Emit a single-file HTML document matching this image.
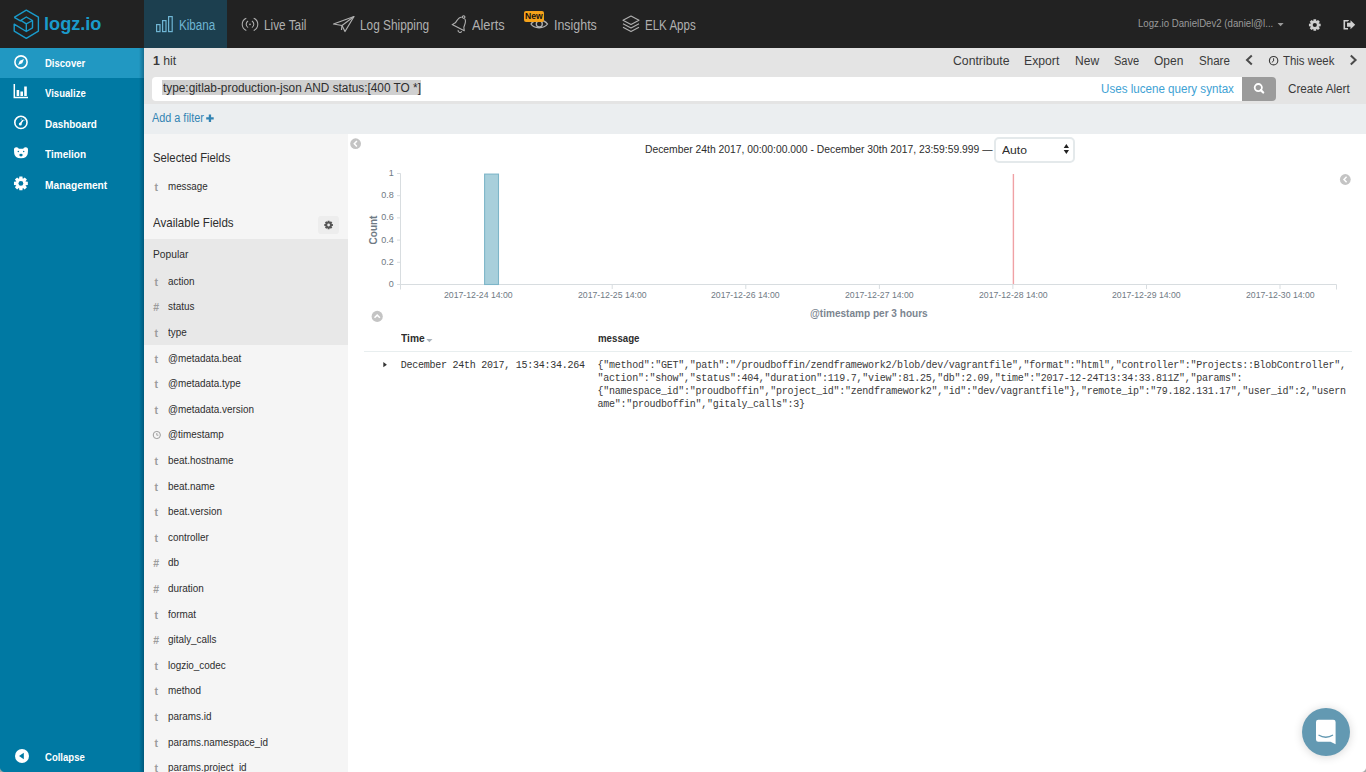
<!DOCTYPE html>
<html><head><meta charset="utf-8">
<style>
*{box-sizing:border-box;margin:0;padding:0}
html,body{width:1366px;height:772px;overflow:hidden;background:#fff;font-family:"Liberation Sans",sans-serif;color:#2d2d2d;position:relative}
.a{position:absolute;white-space:nowrap}
svg.a{overflow:visible}
</style></head><body>
<div class="a" style="left:0px;top:0px;width:1366px;height:48px;background:#222222;"></div>
<div class="a" style="left:0px;top:48px;width:144px;height:724px;background:#0079a3;"></div>
<div class="a" style="left:0px;top:48px;width:144px;height:30px;background:#2198c2;"></div>
<div class="a" style="left:139px;top:48px;width:5px;height:724px;background:linear-gradient(90deg,rgba(0,30,50,0),rgba(0,30,50,0.35));"></div>
<div class="a" style="left:144px;top:48px;width:1222px;height:56px;background:#e4e4e4;"></div>
<div class="a" style="left:144px;top:104px;width:1222px;height:30px;background:#ebeef0;"></div>
<div class="a" style="left:144px;top:134px;width:204px;height:638px;background:#f5f5f5;"></div>
<div class="a" style="left:144px;top:238.5px;width:204px;height:106px;background:#e8e8e8;"></div>
<div class="a" style="left:144px;top:0px;width:83px;height:48px;background:#1c3f4f;"></div>
<svg class="a" style="left:0;top:0" width="60" height="48" viewBox="0 0 60 48"><path d="M14.2 17.4 L26.3 10.2 L38.4 17.2 L38.4 31.1 L26.3 38.4 L14.2 31.1 L14.2 24.1 L26.3 31.5 L32.5 27.8 L32.5 20.5 L26.3 17 L20.8 20.3 L26.3 23.8 L32.5 20.5 M26.3 23.8 L26.3 31.5 M14.2 17.4 L20.8 21.2" fill="none" stroke="#1a9bcb" stroke-width="1.4" stroke-linejoin="round"/></svg>
<div class="a" style="left:44.00px;top:16.09px;font:bold 17.5px/17.5px 'Liberation Sans',sans-serif;color:#1a9bcb;transform:scaleX(1.0369);transform-origin:0 0;">logz.io</div>
<div class="a" style="left:179.40px;top:17.65px;font:normal 14px/14px 'Liberation Sans',sans-serif;color:#6fb5d3;transform:scaleX(0.8311);transform-origin:0 0;">Kibana</div>
<div class="a" style="left:264.00px;top:17.65px;font:normal 14px/14px 'Liberation Sans',sans-serif;color:#b0b0b0;transform:scaleX(0.8431);transform-origin:0 0;">Live Tail</div>
<div class="a" style="left:360.10px;top:17.65px;font:normal 14px/14px 'Liberation Sans',sans-serif;color:#b0b0b0;transform:scaleX(0.8460);transform-origin:0 0;">Log Shipping</div>
<div class="a" style="left:472.00px;top:17.65px;font:normal 14px/14px 'Liberation Sans',sans-serif;color:#b0b0b0;transform:scaleX(0.9116);transform-origin:0 0;">Alerts</div>
<div class="a" style="left:554.00px;top:17.65px;font:normal 14px/14px 'Liberation Sans',sans-serif;color:#b0b0b0;transform:scaleX(0.8869);transform-origin:0 0;">Insights</div>
<div class="a" style="left:645.00px;top:17.65px;font:normal 14px/14px 'Liberation Sans',sans-serif;color:#b0b0b0;transform:scaleX(0.8243);transform-origin:0 0;">ELK Apps</div>
<svg class="a" style="left:150px;top:10px" width="30" height="28" viewBox="150 10 30 28"><g fill="none" stroke="#6fb5d3" stroke-width="1.2"><rect x="156.6" y="24.6" width="3.4" height="7"/><rect x="162.6" y="20.6" width="3.4" height="11"/><rect x="168.6" y="16.6" width="3.6" height="15"/></g></svg>
<svg class="a" style="left:236px;top:10px" width="30" height="28" viewBox="236 10 30 28"><g fill="none" stroke="#b0b0b0" stroke-width="1.05"><path d="M246.3 18.2 A6.6 6.6 0 0 0 246.3 30.4"/><path d="M253.7 18.2 A6.6 6.6 0 0 1 253.7 30.4"/><path d="M248.1 21 A3.8 3.8 0 0 0 248.1 27.6"/><path d="M251.9 21 A3.8 3.8 0 0 1 251.9 27.6"/></g><circle cx="250" cy="24.3" r="0.85" fill="#b0b0b0"/></svg>
<svg class="a" style="left:330px;top:10px" width="30" height="28" viewBox="330 10 30 28"><g fill="none" stroke="#b0b0b0" stroke-width="1.2" stroke-linejoin="round"><path d="M333.5 24 L354 16.5 L345 31.5 L342 25.5 Z"/><path d="M342 25.5 L354 16.5"/><path d="M342 25.5 L341.5 30"/></g></svg>
<svg class="a" style="left:448px;top:10px" width="24" height="28" viewBox="448 10 24 28"><g fill="none" stroke="#b0b0b0" stroke-width="1.1" stroke-linejoin="round"><g transform="translate(460.3 23.6) rotate(27)"><circle cx="0" cy="-7.4" r="1.25"/><path d="M-1.5 -6.3 C-4.5 -5.7 -4.3 -1.5 -4.8 1.6 L-6.8 4.6 L6.8 4.6 L4.8 1.6 C4.3 -1.5 4.5 -5.7 1.5 -6.3"/></g><path d="M458.2 30 A1.7 1.7 0 0 0 461.6 31.2"/></g></svg>
<svg class="a" style="left:526px;top:14px" width="26" height="20" viewBox="526 14 26 20"><g fill="none" stroke="#b0b0b0" stroke-width="1.3"><path d="M531 24 C534 19 544 19 547.5 24 C544 29 534 29 531 24 Z"/><circle cx="539.3" cy="24" r="3"/></g></svg>
<div class="a" style="left:524px;top:11px;width:19.5px;height:10.5px;background:#f5a21a;border-radius:2px"></div>
<div class="a" style="left:525.40px;top:11.98px;font:bold 9px/9px 'Liberation Sans',sans-serif;color:#111111;transform:scaleX(0.9558);transform-origin:0 0;">New</div>
<svg class="a" style="left:618px;top:12px" width="26" height="24" viewBox="618 12 26 24"><g fill="none" stroke="#b0b0b0" stroke-width="1.1" stroke-linejoin="round"><path d="M631 16 L639 20.3 L631 24.6 L623 20.3 Z"/><path d="M623 23.8 L631 28.1 L639 23.8"/><path d="M623 27.3 L631 31.6 L639 27.3"/></g></svg>
<div class="a" style="left:1138.00px;top:18.47px;font:normal 11.5px/11.5px 'Liberation Sans',sans-serif;color:#9a9a9a;transform:scaleX(0.8389);transform-origin:0 0;">Logz.io DanielDev2 (daniel@l...</div>
<svg class="a" style="left:1274px;top:20px" width="12" height="8" viewBox="1274 20 12 8"><path d="M1277.6 23 L1283.6 23 L1280.6 26.3 Z" fill="#9a9a9a"/></svg>
<svg class="a" style="left:1300px;top:12px" width="30" height="26" viewBox="1300 12 30 26"><path d="M1320.66 23.69 L1320.66 26.31 L1318.84 26.52 L1318.73 26.78 L1319.87 28.21 L1318.01 30.07 L1316.58 28.93 L1316.32 29.04 L1316.11 30.86 L1313.49 30.86 L1313.28 29.04 L1313.02 28.93 L1311.59 30.07 L1309.73 28.21 L1310.87 26.78 L1310.76 26.52 L1308.94 26.31 L1308.94 23.69 L1310.76 23.48 L1310.87 23.22 L1309.73 21.79 L1311.59 19.93 L1313.02 21.07 L1313.28 20.96 L1313.49 19.14 L1316.11 19.14 L1316.32 20.96 L1316.58 21.07 L1318.01 19.93 L1319.87 21.79 L1318.73 23.22 L1318.84 23.48Z" fill="#cfcfcf"/><circle cx="1314.8" cy="25" r="2.1" fill="#222222"/></svg>
<svg class="a" style="left:1338px;top:14px" width="22" height="20" viewBox="1338 14 22 20"><g fill="none" stroke="#cfcfcf" stroke-width="1.6"><path d="M1348 21 L1348 20.8 L1344.3 20.8 L1344.3 28.7 L1348 28.7"/></g><path d="M1347 22.8 L1350.5 22.8 L1350.5 20.3 L1355.2 24.8 L1350.5 29.3 L1350.5 26.8 L1347 26.8 Z" fill="#cfcfcf"/></svg>
<div class="a" style="left:44.90px;top:58.27px;font:bold 11.5px/11.5px 'Liberation Sans',sans-serif;color:#ffffff;transform:scaleX(0.8266);transform-origin:0 0;">Discover</div>
<div class="a" style="left:44.90px;top:88.07px;font:bold 11.5px/11.5px 'Liberation Sans',sans-serif;color:#ffffff;transform:scaleX(0.8318);transform-origin:0 0;">Visualize</div>
<div class="a" style="left:44.90px;top:118.87px;font:bold 11.5px/11.5px 'Liberation Sans',sans-serif;color:#ffffff;transform:scaleX(0.8623);transform-origin:0 0;">Dashboard</div>
<div class="a" style="left:44.90px;top:148.87px;font:bold 11.5px/11.5px 'Liberation Sans',sans-serif;color:#ffffff;transform:scaleX(0.8710);transform-origin:0 0;">Timelion</div>
<div class="a" style="left:44.90px;top:179.87px;font:bold 11.5px/11.5px 'Liberation Sans',sans-serif;color:#ffffff;transform:scaleX(0.8851);transform-origin:0 0;">Management</div>
<div class="a" style="left:44.90px;top:752.27px;font:bold 11.5px/11.5px 'Liberation Sans',sans-serif;color:#ffffff;transform:scaleX(0.8296);transform-origin:0 0;">Collapse</div>
<svg class="a" style="left:10px;top:50px" width="24" height="24" viewBox="10 50 24 24"><circle cx="21" cy="62" r="6.1" fill="none" stroke="#ffffff" stroke-width="1.6"/><path d="M24 59 L22.2 63.2 L18 65 L19.8 60.8 Z" fill="#ffffff"/></svg>
<svg class="a" style="left:10px;top:82px" width="24" height="20" viewBox="10 82 24 20"><path d="M14.3 84 L14.3 97.6 L28 97.6" fill="none" stroke="#ffffff" stroke-width="1.5"/><rect x="16.6" y="90" width="2.6" height="6" fill="#ffffff"/><rect x="20.4" y="91.5" width="2.6" height="4.5" fill="#ffffff"/><rect x="24.2" y="86.5" width="2.6" height="9.5" fill="#ffffff"/></svg>
<svg class="a" style="left:10px;top:112px" width="24" height="24" viewBox="10 112 24 24"><circle cx="20.9" cy="122.4" r="6.1" fill="none" stroke="#ffffff" stroke-width="1.6"/><circle cx="20.3" cy="123.9" r="1.5" fill="#ffffff"/><path d="M20.3 123.9 L22.6 120.6" stroke="#ffffff" stroke-width="1.6" stroke-linecap="round"/><circle cx="21.2" cy="119" r="0.6" fill="#ffffff"/><circle cx="23.9" cy="120.2" r="0.6" fill="#ffffff"/></svg>
<svg class="a" style="left:10px;top:142px" width="24" height="24" viewBox="10 142 24 24"><path d="M14 150 Q13.8 147.2 16.6 147.3 Q18.4 147.4 18.8 148.8 L23.2 148.8 Q23.6 147.4 25.4 147.3 Q28.2 147.2 28 150 L27.8 153.2 Q27.4 158.3 21 158.3 Q14.6 158.3 14.2 153.2 Z" fill="#ffffff"/><circle cx="18.3" cy="151.4" r="0.75" fill="#0079a3"/><circle cx="23.7" cy="151.4" r="0.75" fill="#0079a3"/><ellipse cx="21" cy="155.1" rx="1.7" ry="1.3" fill="#0079a3"/></svg>
<svg class="a" style="left:10px;top:172px" width="24" height="26" viewBox="10 172 24 26"><path d="M27.83 181.85 L27.83 184.95 L25.68 185.20 L25.56 185.51 L26.90 187.20 L24.70 189.40 L23.01 188.06 L22.70 188.18 L22.45 190.33 L19.35 190.33 L19.10 188.18 L18.79 188.06 L17.10 189.40 L14.90 187.20 L16.24 185.51 L16.12 185.20 L13.97 184.95 L13.97 181.85 L16.12 181.60 L16.24 181.29 L14.90 179.60 L17.10 177.40 L18.79 178.74 L19.10 178.62 L19.35 176.47 L22.45 176.47 L22.70 178.62 L23.01 178.74 L24.70 177.40 L26.90 179.60 L25.56 181.29 L25.68 181.60Z" fill="#ffffff"/><circle cx="20.9" cy="183.4" r="2.4" fill="#0079a3"/></svg>
<svg class="a" style="left:12px;top:746px" width="20" height="20" viewBox="12 746 20 20"><circle cx="22" cy="756" r="7" fill="#ffffff"/><path d="M19 756 L23.8 752.8 L23.8 759.2 Z" fill="#0079a3"/></svg>
<div class="a" style="left:152.50px;top:54.30px;font:normal 13px/13px 'Liberation Sans',sans-serif;color:#3a3a3a;transform:scaleX(0.9434);transform-origin:0 0;"><b>1</b> hit</div>
<div class="a" style="left:952.50px;top:54.72px;font:normal 12.5px/12.5px 'Liberation Sans',sans-serif;color:#3a3a3a;transform:scaleX(0.9793);transform-origin:0 0;">Contribute</div>
<div class="a" style="left:1024.20px;top:54.72px;font:normal 12.5px/12.5px 'Liberation Sans',sans-serif;color:#3a3a3a;transform:scaleX(0.9765);transform-origin:0 0;">Export</div>
<div class="a" style="left:1074.70px;top:54.72px;font:normal 12.5px/12.5px 'Liberation Sans',sans-serif;color:#3a3a3a;transform:scaleX(0.9623);transform-origin:0 0;">New</div>
<div class="a" style="left:1113.70px;top:54.72px;font:normal 12.5px/12.5px 'Liberation Sans',sans-serif;color:#3a3a3a;transform:scaleX(0.8839);transform-origin:0 0;">Save</div>
<div class="a" style="left:1154.20px;top:54.72px;font:normal 12.5px/12.5px 'Liberation Sans',sans-serif;color:#3a3a3a;transform:scaleX(0.9602);transform-origin:0 0;">Open</div>
<div class="a" style="left:1198.80px;top:54.72px;font:normal 12.5px/12.5px 'Liberation Sans',sans-serif;color:#3a3a3a;transform:scaleX(0.9241);transform-origin:0 0;">Share</div>
<div class="a" style="left:1283.00px;top:54.72px;font:normal 12.5px/12.5px 'Liberation Sans',sans-serif;color:#3a3a3a;transform:scaleX(0.9137);transform-origin:0 0;">This week</div>
<svg class="a" style="left:1240px;top:50px" width="124" height="22" viewBox="1240 50 124 22"><path d="M1251.8 55.6 L1247 60.1 L1251.8 64.6" fill="none" stroke="#4a4a4a" stroke-width="2"/><circle cx="1273.6" cy="60.7" r="4.2" fill="none" stroke="#3a3a3a" stroke-width="1.1"/><path d="M1273.6 58.2 L1273.6 61 L1271.8 62.4" fill="none" stroke="#3a3a3a" stroke-width="1"/><path d="M1350.8 55.6 L1355.6 60.1 L1350.8 64.6" fill="none" stroke="#4a4a4a" stroke-width="2"/></svg>
<div class="a" style="left:152px;top:77.3px;width:1090px;height:23.3px;background:#ffffff;border-radius:4px 0 0 4px"></div>
<div class="a" style="left:162px;top:80px;width:259px;height:15px;background:#d0d0d0;"></div>
<div class="a" style="left:162.80px;top:82.04px;font:normal 12px/12px 'Liberation Sans',sans-serif;color:#2d2d2d;transform:scaleX(0.9858);transform-origin:0 0;">type:gitlab-production-json AND status:[400 TO *]</div>
<div class="a" style="left:1100.60px;top:83.24px;font:normal 12px/12px 'Liberation Sans',sans-serif;color:#3ea2d4;transform:scaleX(0.9674);transform-origin:0 0;">Uses lucene query syntax</div>
<div class="a" style="left:1242px;top:77.3px;width:34px;height:23.3px;background:#9b9b9b;border-radius:0 4px 4px 0"></div>
<svg class="a" style="left:1250px;top:80px" width="18" height="18" viewBox="1250 80 18 18"><circle cx="1258.3" cy="87.6" r="3.6" fill="none" stroke="#fff" stroke-width="1.8"/><path d="M1260.8 90.1 L1263.2 92.5" stroke="#fff" stroke-width="2.2" stroke-linecap="round"/></svg>
<div class="a" style="left:1288.30px;top:83.24px;font:normal 12px/12px 'Liberation Sans',sans-serif;color:#3a3a3a;transform:scaleX(0.9736);transform-origin:0 0;">Create Alert</div>
<div class="a" style="left:152.00px;top:112.14px;font:normal 12px/12px 'Liberation Sans',sans-serif;color:#3384b3;transform:scaleX(0.9042);transform-origin:0 0;">Add a filter</div>
<svg class="a" style="left:204px;top:112px" width="12" height="12" viewBox="204 112 12 12"><path d="M209.95 114.6 L209.95 122.1 M206.2 118.35 L213.7 118.35" stroke="#3384b3" stroke-width="2.3"/></svg>
<div class="a" style="left:152.70px;top:151.30px;font:normal 13px/13px 'Liberation Sans',sans-serif;color:#2d2d2d;transform:scaleX(0.8698);transform-origin:0 0;">Selected Fields</div>
<div class="a" style="left:152.70px;top:216.00px;font:normal 13px/13px 'Liberation Sans',sans-serif;color:#2d2d2d;transform:scaleX(0.8878);transform-origin:0 0;">Available Fields</div>
<div class="a" style="left:318.4px;top:216px;width:20.4px;height:18px;background:#ededed;border-radius:3px"></div>
<svg class="a" style="left:318px;top:216px" width="21" height="18" viewBox="318 216 21 18"><path d="M332.89 224.04 L332.89 225.96 L331.56 226.12 L331.49 226.31 L332.32 227.36 L330.96 228.72 L329.91 227.89 L329.72 227.96 L329.56 229.29 L327.64 229.29 L327.48 227.96 L327.29 227.89 L326.24 228.72 L324.88 227.36 L325.71 226.31 L325.64 226.12 L324.31 225.96 L324.31 224.04 L325.64 223.88 L325.71 223.69 L324.88 222.64 L326.24 221.28 L327.29 222.11 L327.48 222.04 L327.64 220.71 L329.56 220.71 L329.72 222.04 L329.91 222.11 L330.96 221.28 L332.32 222.64 L331.49 223.69 L331.56 223.88Z" fill="#555555"/><circle cx="328.6" cy="225" r="1.4" fill="#ededed"/></svg>
<div class="a" style="left:153.00px;top:248.57px;font:normal 11.5px/11.5px 'Liberation Sans',sans-serif;color:#2d2d2d;transform:scaleX(0.8911);transform-origin:0 0;">Popular</div>
<div class="a" style="left:154.60px;top:181.61px;font:bold 10.5px/10.5px 'Liberation Sans',sans-serif;color:#9c9c9c;">t</div>
<div class="a" style="left:168.20px;top:180.77px;font:normal 11.5px/11.5px 'Liberation Sans',sans-serif;color:#2d2d2d;transform:scaleX(0.8504);transform-origin:0 0;">message</div>
<div class="a" style="left:154.60px;top:276.71px;font:bold 10.5px/10.5px 'Liberation Sans',sans-serif;color:#9c9c9c;">t</div>
<div class="a" style="left:168.20px;top:275.87px;font:normal 11.5px/11.5px 'Liberation Sans',sans-serif;color:#2d2d2d;transform:scaleX(0.8600);transform-origin:0 0;">action</div>
<div class="a" style="left:153.30px;top:302.31px;font:bold 10.5px/10.5px 'Liberation Sans',sans-serif;color:#9c9c9c;">#</div>
<div class="a" style="left:168.20px;top:301.47px;font:normal 11.5px/11.5px 'Liberation Sans',sans-serif;color:#2d2d2d;transform:scaleX(0.8600);transform-origin:0 0;">status</div>
<div class="a" style="left:154.60px;top:327.91px;font:bold 10.5px/10.5px 'Liberation Sans',sans-serif;color:#9c9c9c;">t</div>
<div class="a" style="left:168.20px;top:327.07px;font:normal 11.5px/11.5px 'Liberation Sans',sans-serif;color:#2d2d2d;transform:scaleX(0.8600);transform-origin:0 0;">type</div>
<div class="a" style="left:154.60px;top:353.51px;font:bold 10.5px/10.5px 'Liberation Sans',sans-serif;color:#9c9c9c;">t</div>
<div class="a" style="left:168.20px;top:352.67px;font:normal 11.5px/11.5px 'Liberation Sans',sans-serif;color:#2d2d2d;transform:scaleX(0.8600);transform-origin:0 0;">@metadata.beat</div>
<div class="a" style="left:154.60px;top:379.11px;font:bold 10.5px/10.5px 'Liberation Sans',sans-serif;color:#9c9c9c;">t</div>
<div class="a" style="left:168.20px;top:378.27px;font:normal 11.5px/11.5px 'Liberation Sans',sans-serif;color:#2d2d2d;transform:scaleX(0.8600);transform-origin:0 0;">@metadata.type</div>
<div class="a" style="left:154.60px;top:404.71px;font:bold 10.5px/10.5px 'Liberation Sans',sans-serif;color:#9c9c9c;">t</div>
<div class="a" style="left:168.20px;top:403.87px;font:normal 11.5px/11.5px 'Liberation Sans',sans-serif;color:#2d2d2d;transform:scaleX(0.8600);transform-origin:0 0;">@metadata.version</div>
<svg class="a" style="left:150px;top:426.6px" width="14" height="14" viewBox="0 0 14 14"><circle cx="6.8" cy="8" r="3.6" fill="none" stroke="#9c9c9c" stroke-width="1"/><path d="M6.8 6 L6.8 8.2 L8.4 8.2" fill="none" stroke="#9c9c9c" stroke-width="0.9"/></svg>
<div class="a" style="left:168.20px;top:429.47px;font:normal 11.5px/11.5px 'Liberation Sans',sans-serif;color:#2d2d2d;transform:scaleX(0.8600);transform-origin:0 0;">@timestamp</div>
<div class="a" style="left:154.60px;top:455.91px;font:bold 10.5px/10.5px 'Liberation Sans',sans-serif;color:#9c9c9c;">t</div>
<div class="a" style="left:168.20px;top:455.07px;font:normal 11.5px/11.5px 'Liberation Sans',sans-serif;color:#2d2d2d;transform:scaleX(0.8600);transform-origin:0 0;">beat.hostname</div>
<div class="a" style="left:154.60px;top:481.51px;font:bold 10.5px/10.5px 'Liberation Sans',sans-serif;color:#9c9c9c;">t</div>
<div class="a" style="left:168.20px;top:480.67px;font:normal 11.5px/11.5px 'Liberation Sans',sans-serif;color:#2d2d2d;transform:scaleX(0.8600);transform-origin:0 0;">beat.name</div>
<div class="a" style="left:154.60px;top:507.11px;font:bold 10.5px/10.5px 'Liberation Sans',sans-serif;color:#9c9c9c;">t</div>
<div class="a" style="left:168.20px;top:506.27px;font:normal 11.5px/11.5px 'Liberation Sans',sans-serif;color:#2d2d2d;transform:scaleX(0.8600);transform-origin:0 0;">beat.version</div>
<div class="a" style="left:154.60px;top:532.71px;font:bold 10.5px/10.5px 'Liberation Sans',sans-serif;color:#9c9c9c;">t</div>
<div class="a" style="left:168.20px;top:531.87px;font:normal 11.5px/11.5px 'Liberation Sans',sans-serif;color:#2d2d2d;transform:scaleX(0.8600);transform-origin:0 0;">controller</div>
<div class="a" style="left:153.30px;top:558.31px;font:bold 10.5px/10.5px 'Liberation Sans',sans-serif;color:#9c9c9c;">#</div>
<div class="a" style="left:168.20px;top:557.47px;font:normal 11.5px/11.5px 'Liberation Sans',sans-serif;color:#2d2d2d;transform:scaleX(0.8600);transform-origin:0 0;">db</div>
<div class="a" style="left:153.30px;top:583.91px;font:bold 10.5px/10.5px 'Liberation Sans',sans-serif;color:#9c9c9c;">#</div>
<div class="a" style="left:168.20px;top:583.07px;font:normal 11.5px/11.5px 'Liberation Sans',sans-serif;color:#2d2d2d;transform:scaleX(0.8600);transform-origin:0 0;">duration</div>
<div class="a" style="left:154.60px;top:609.51px;font:bold 10.5px/10.5px 'Liberation Sans',sans-serif;color:#9c9c9c;">t</div>
<div class="a" style="left:168.20px;top:608.67px;font:normal 11.5px/11.5px 'Liberation Sans',sans-serif;color:#2d2d2d;transform:scaleX(0.8600);transform-origin:0 0;">format</div>
<div class="a" style="left:153.30px;top:635.11px;font:bold 10.5px/10.5px 'Liberation Sans',sans-serif;color:#9c9c9c;">#</div>
<div class="a" style="left:168.20px;top:634.27px;font:normal 11.5px/11.5px 'Liberation Sans',sans-serif;color:#2d2d2d;transform:scaleX(0.8600);transform-origin:0 0;">gitaly_calls</div>
<div class="a" style="left:154.60px;top:660.71px;font:bold 10.5px/10.5px 'Liberation Sans',sans-serif;color:#9c9c9c;">t</div>
<div class="a" style="left:168.20px;top:659.87px;font:normal 11.5px/11.5px 'Liberation Sans',sans-serif;color:#2d2d2d;transform:scaleX(0.8600);transform-origin:0 0;">logzio_codec</div>
<div class="a" style="left:154.60px;top:686.31px;font:bold 10.5px/10.5px 'Liberation Sans',sans-serif;color:#9c9c9c;">t</div>
<div class="a" style="left:168.20px;top:685.47px;font:normal 11.5px/11.5px 'Liberation Sans',sans-serif;color:#2d2d2d;transform:scaleX(0.8600);transform-origin:0 0;">method</div>
<div class="a" style="left:154.60px;top:711.91px;font:bold 10.5px/10.5px 'Liberation Sans',sans-serif;color:#9c9c9c;">t</div>
<div class="a" style="left:168.20px;top:711.07px;font:normal 11.5px/11.5px 'Liberation Sans',sans-serif;color:#2d2d2d;transform:scaleX(0.8600);transform-origin:0 0;">params.id</div>
<div class="a" style="left:154.60px;top:737.51px;font:bold 10.5px/10.5px 'Liberation Sans',sans-serif;color:#9c9c9c;">t</div>
<div class="a" style="left:168.20px;top:736.67px;font:normal 11.5px/11.5px 'Liberation Sans',sans-serif;color:#2d2d2d;transform:scaleX(0.8600);transform-origin:0 0;">params.namespace_id</div>
<div class="a" style="left:154.60px;top:763.11px;font:bold 10.5px/10.5px 'Liberation Sans',sans-serif;color:#9c9c9c;">t</div>
<div class="a" style="left:168.20px;top:762.27px;font:normal 11.5px/11.5px 'Liberation Sans',sans-serif;color:#2d2d2d;transform:scaleX(0.8600);transform-origin:0 0;">params.project_id</div>
<div class="a" style="left:645.00px;top:143.87px;font:normal 11.5px/11.5px 'Liberation Sans',sans-serif;color:#2d2d2d;transform:scaleX(0.8985);transform-origin:0 0;">December 24th 2017, 00:00:00.000 - December 30th 2017, 23:59:59.999 —</div>
<div class="a" style="left:994.3px;top:137.2px;width:80.3px;height:25.4px;background:#ffffff;border:2px solid #e4e9eb;border-radius:5px"></div>
<div class="a" style="left:1002.10px;top:144.87px;font:normal 11.5px/11.5px 'Liberation Sans',sans-serif;color:#2d2d2d;transform:scaleX(1.0555);transform-origin:0 0;">Auto</div>
<svg class="a" style="left:1060px;top:140px" width="12" height="18" viewBox="1060 140 12 18"><path d="M1063.7 148.1 L1066.35 144.1 L1069 148.1 Z M1063.7 150.1 L1066.35 154 L1069 150.1 Z" fill="#222"/></svg>
<svg class="a" style="left:348px;top:134px" width="1018" height="200" viewBox="348 134 1018 200"><circle cx="355.6" cy="143.7" r="5.4" fill="#c4c4c4"/><path d="M356.9 141 L354.3 143.7 L356.9 146.4" fill="none" stroke="#fff" stroke-width="1.5"/><circle cx="1345.3" cy="179.5" r="5.4" fill="#c4c4c4"/><path d="M1346.6 176.8 L1344 179.5 L1346.6 182.2" fill="none" stroke="#fff" stroke-width="1.5"/><circle cx="377.2" cy="316.4" r="5.6" fill="#c4c4c4"/><path d="M374.5 317.8 L377.2 315.1 L379.9 317.8" fill="none" stroke="#fff" stroke-width="1.5"/><path d="M400.5 173.4 L400.5 289.5 M400.5 284.5 L1336.5 284.5 M1336.5 284.5 L1336.5 289.5" stroke="#d8dde0" stroke-width="1" fill="none"/><path d="M397 284.5 L400.5 284.5" stroke="#d8dde0" stroke-width="1"/><path d="M397 262.3 L400.5 262.3" stroke="#d8dde0" stroke-width="1"/><path d="M397 240.1 L400.5 240.1" stroke="#d8dde0" stroke-width="1"/><path d="M397 217.9 L400.5 217.9" stroke="#d8dde0" stroke-width="1"/><path d="M397 195.7 L400.5 195.7" stroke="#d8dde0" stroke-width="1"/><path d="M397 173.5 L400.5 173.5" stroke="#d8dde0" stroke-width="1"/><path d="M612.2 284.5 L612.2 289" stroke="#d8dde0" stroke-width="1"/><path d="M745.8 284.5 L745.8 289" stroke="#d8dde0" stroke-width="1"/><path d="M879.4 284.5 L879.4 289" stroke="#d8dde0" stroke-width="1"/><path d="M1012.9 284.5 L1012.9 289" stroke="#d8dde0" stroke-width="1"/><path d="M1146.5 284.5 L1146.5 289" stroke="#d8dde0" stroke-width="1"/><path d="M1280.0 284.5 L1280.0 289" stroke="#d8dde0" stroke-width="1"/><rect x="484.6" y="174.1" width="13.9" height="110.4" fill="#a8cfdb" stroke="#7db5c8" stroke-width="1.1"/><path d="M1013.4 174 L1013.4 284" stroke="#f0a1a5" stroke-width="1.4"/></svg>
<div class="a" style="left:388.79px;top:280.08px;font:normal 9px/9px 'Liberation Sans',sans-serif;color:#6f7a84;">0</div>
<div class="a" style="left:381.29px;top:257.88px;font:normal 9px/9px 'Liberation Sans',sans-serif;color:#6f7a84;">0.2</div>
<div class="a" style="left:381.29px;top:235.68px;font:normal 9px/9px 'Liberation Sans',sans-serif;color:#6f7a84;">0.4</div>
<div class="a" style="left:381.29px;top:213.48px;font:normal 9px/9px 'Liberation Sans',sans-serif;color:#6f7a84;">0.6</div>
<div class="a" style="left:381.29px;top:191.28px;font:normal 9px/9px 'Liberation Sans',sans-serif;color:#6f7a84;">0.8</div>
<div class="a" style="left:388.79px;top:169.08px;font:normal 9px/9px 'Liberation Sans',sans-serif;color:#6f7a84;">1</div>
<div class="a" style="left:444.35px;top:290.16px;font:normal 9.5px/9.5px 'Liberation Sans',sans-serif;color:#6f7a84;transform:scaleX(0.9159);transform-origin:0 0;">2017-12-24 14:00</div>
<div class="a" style="left:577.90px;top:290.16px;font:normal 9.5px/9.5px 'Liberation Sans',sans-serif;color:#6f7a84;transform:scaleX(0.9159);transform-origin:0 0;">2017-12-25 14:00</div>
<div class="a" style="left:711.45px;top:290.16px;font:normal 9.5px/9.5px 'Liberation Sans',sans-serif;color:#6f7a84;transform:scaleX(0.9159);transform-origin:0 0;">2017-12-26 14:00</div>
<div class="a" style="left:845.00px;top:290.16px;font:normal 9.5px/9.5px 'Liberation Sans',sans-serif;color:#6f7a84;transform:scaleX(0.9159);transform-origin:0 0;">2017-12-27 14:00</div>
<div class="a" style="left:978.55px;top:290.16px;font:normal 9.5px/9.5px 'Liberation Sans',sans-serif;color:#6f7a84;transform:scaleX(0.9159);transform-origin:0 0;">2017-12-28 14:00</div>
<div class="a" style="left:1112.10px;top:290.16px;font:normal 9.5px/9.5px 'Liberation Sans',sans-serif;color:#6f7a84;transform:scaleX(0.9159);transform-origin:0 0;">2017-12-29 14:00</div>
<div class="a" style="left:1245.65px;top:290.16px;font:normal 9.5px/9.5px 'Liberation Sans',sans-serif;color:#6f7a84;transform:scaleX(0.9159);transform-origin:0 0;">2017-12-30 14:00</div>
<div class="a" style="left:809.55px;top:308.94px;font:bold 10px/10px 'Liberation Sans',sans-serif;color:#7b8590;transform:scaleX(1.0060);transform-origin:0 0;">@timestamp per 3 hours</div>
<div class="a" style="left:358.8px;top:223.8px;width:30px;height:12px;transform:rotate(-90deg);font:bold 10px/12px 'Liberation Sans',sans-serif;color:#6f7a84;text-align:center">Count</div>
<div class="a" style="left:400.70px;top:332.91px;font:bold 10.5px/10.5px 'Liberation Sans',sans-serif;color:#2d2d2d;transform:scaleX(0.9712);transform-origin:0 0;">Time</div>
<svg class="a" style="left:424px;top:336px" width="10" height="8" viewBox="424 336 10 8"><path d="M426.3 338.9 L432.5 338.9 L429.4 342.2 Z" fill="#aab4bd"/></svg>
<div class="a" style="left:597.60px;top:332.91px;font:bold 10.5px/10.5px 'Liberation Sans',sans-serif;color:#2d2d2d;transform:scaleX(0.9227);transform-origin:0 0;">message</div>
<div class="a" style="left:364px;top:351px;width:988px;height:1px;background:#e8eeef;"></div>
<svg class="a" style="left:380px;top:358px" width="10" height="12" viewBox="380 358 10 12"><path d="M383.3 362 L386.9 364.65 L383.3 367.3 Z" fill="#333"/></svg>
<div class="a" style="left:400.70px;top:360.94px;font:normal 10px/10px 'Liberation Mono',monospace;color:#333333;letter-spacing:-0.245px;">December 24th 2017, 15:34:34.264</div>
<div class="a" style="left:597.60px;top:360.94px;font:normal 10px/10px 'Liberation Mono',monospace;color:#3a3a3a;letter-spacing:-0.245px;">{"method":"GET","path":"/proudboffin/zendframework2/blob/dev/vagrantfile","format":"html","controller":"Projects::BlobController",</div>
<div class="a" style="left:597.60px;top:373.99px;font:normal 10px/10px 'Liberation Mono',monospace;color:#3a3a3a;letter-spacing:-0.245px;">"action":"show","status":404,"duration":119.7,"view":81.25,"db":2.09,"time":"2017-12-24T13:34:33.811Z","params":</div>
<div class="a" style="left:597.60px;top:387.04px;font:normal 10px/10px 'Liberation Mono',monospace;color:#3a3a3a;letter-spacing:-0.245px;">{"namespace_id":"proudboffin","project_id":"zendframework2","id":"dev/vagrantfile"},"remote_ip":"79.182.131.17","user_id":2,"usern</div>
<div class="a" style="left:597.60px;top:400.08px;font:normal 10px/10px 'Liberation Mono',monospace;color:#3a3a3a;letter-spacing:-0.245px;">ame":"proudboffin","gitaly_calls":3}</div>
<div class="a" style="left:1302px;top:708px;width:48px;height:48px;border-radius:50%;background:#6399b2;box-shadow:0 1px 10px rgba(0,0,0,0.16)"></div>
<svg class="a" style="left:1310px;top:716px" width="32" height="32" viewBox="1310 716 32 32"><path d="M1316 722 Q1316 719.7 1318.3 719.7 L1333.3 719.7 Q1335.6 719.7 1335.6 722 L1335.6 744.3 L1330.5 741.8 L1318.3 741.8 Q1316 741.8 1316 739.5 Z" fill="#fff"/><path d="M1318.5 735 Q1325.8 739.5 1333 735" fill="none" stroke="#6399b2" stroke-width="1.3"/></svg>
<div class="a" style="left:1361px;top:767px;width:5px;height:5px;background:radial-gradient(circle at 0 0, rgba(0,0,0,0) 4.6px, rgba(150,150,150,0.8) 5.6px)"></div>
<div class="a" style="left:0;top:767px;width:5px;height:5px;background:radial-gradient(circle at 100% 0, rgba(0,0,0,0) 4.6px, rgba(190,180,170,0.8) 5.6px)"></div>
</body></html>
